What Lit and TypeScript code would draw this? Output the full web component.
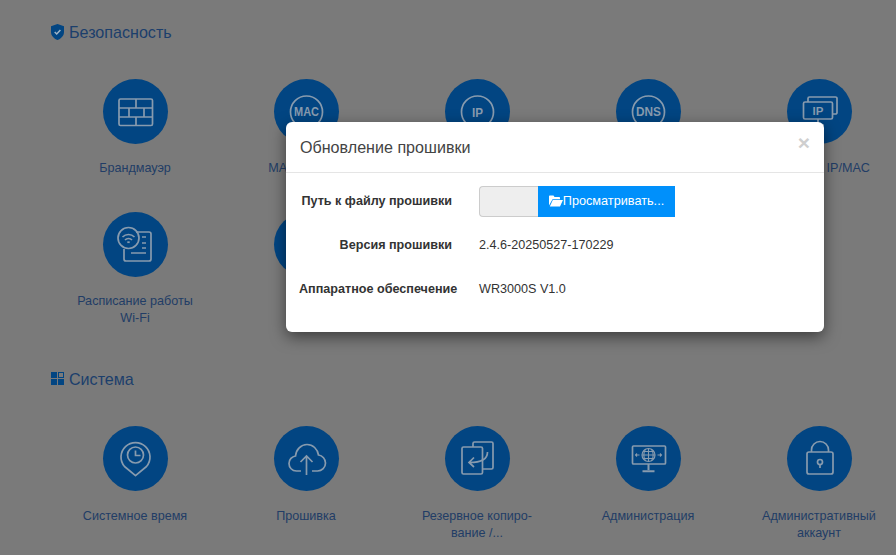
import { LitElement, html, css, svg } from "lit";
import { customElement } from "lit/decorators.js";

const ring = (t: string, size = 12, len = 25) => svg`<circle cx="32.5" cy="33" r="16"/><text x="32.5" y="${33 + size * 0.36}" font-size="${size}" text-anchor="middle" textLength="${len}" lengthAdjust="spacingAndGlyphs">${t}</text>`;

const ICONS: Record<string, unknown> = {
  wall: svg`<rect x="16" y="20" width="33.500" height="26.5" rx="1.5"/><path d="M16 29h33.500M16 38h33.500M33 20v9M26 29v9M41 29v9M33 38v8.5"/>`,
  mac: ring("MAC"),
  ip: ring("IP", 13, 11),
  dns: ring("DNS"),
  bind: svg`<rect x="16.5" y="23" width="29" height="17" rx="1.5"/><path d="M21 23v-3.5a1.5 1.5 0 0 1 1.5-1.5h26a1.5 1.5 0 0 1 1.5 1.5v14a1.5 1.5 0 0 1-1.5 1.5h-3M31 40v5M25 46h12"/><text x="31" y="36" font-size="11.5" text-anchor="middle">IP</text>`,
  wifi: svg`<path d="M33 20h13a2 2 0 0 1 2 2v25a2 2 0 0 1-2 2H23a2 2 0 0 1-2-2V37"/><circle cx="25.5" cy="26" r="10.5"/><path d="M19.5 25a8.5 8.5 0 0 1 12 0M22 28a5 5 0 0 1 7 0M24.3 30.5a2 2 0 0 1 2.4 0M39 25h4M39 31h4M39 36h4M28 41h15"/>`,
  time: svg`<path d="M32.5 49.700 L21.500 40.500 A14.500 14.500 0 1 1 43.500 40.500 Z" stroke-linejoin="round"/><circle cx="32.5" cy="29" r="8"/><path d="M32.5 24.500V29.500H37.500"/>`,
  cloud: svg`<path d="M27 45H22.5C18 45 15 41.5 15 37.5 15 33.5 18 30.5 21.5 30 22 23.5 27 18.5 33 18.5 39 18.5 43.5 23 44.5 29 48.5 29.5 51.5 33 51.5 37 51.5 41.5 48 45 43.5 45H38"/><path d="M32.5 49V30M26.5 36l6-6 6 6"/>`,
  backup: svg`<rect x="17" y="21" width="20.5" height="27" rx="1.5"/><path d="M28 21v-3.5a1.5 1.5 0 0 1 1.5-1.5h17a1.5 1.5 0 0 1 1.5 1.5v24a1.5 1.5 0 0 1-1.5 1.5h-9"/><path d="M42.5 26c0 7-6 10.500-18 10.500M29 31.500l-5 5 5 4.500"/>`,
  admin: svg`<rect x="16.500" y="20" width="33" height="18" rx="1"/><circle cx="32.500" cy="29" r="6.500" stroke-width="1.200"/><path stroke-width="1.100" d="M26 29h13M32.500 22.500v13M29.500 23c-2 3.500-2 8.500 0 12M35.500 23c2 3.500 2 8.500 0 12M27 25.500h11M27 32.500h11M19.500 29h4M45.500 29h-4M21 27.500l-1.500 1.500 1.500 1.500M44 27.500l1.500 1.500-1.500 1.500"/><path d="M32.500 38v6M26.500 45.200h12" stroke-width="2"/>`,
  lock: svg`<rect x="20" y="26" width="26" height="22" rx="2"/><path d="M24.500 26v-2a8.500 8.500 0 0 1 17 0v2"/><path d="M33 42v-3.500M33 38.500a2.500 2.500 0 1 0 0-5 2.500 2.500 0 0 0 0 5z"/>`,
  blank: svg``,
};

@customElement("app-root")
export class AppRoot extends LitElement {
  static styles = css`
    :host {
      display: block;
      position: relative;
      width: 896px;
      height: 555px;
      overflow: hidden;
      background: #7a7a7a;
      font-family: "Liberation Sans", Arial, sans-serif;
    }
    .page {
      display: flex;
      flex-direction: column;
      padding: 23px 0 0 49.5px;
    }
    .head {
      display: flex;
      align-items: center;
      gap: 5px;
      height: 18px;
      font-size: 16.1px;
      color: #1c3f6c;
      margin-left: 1.5px;
    }
    .head svg { flex: none; display: block; }
    .head svg.squares { margin-top: -2px; }
    .grid {
      display: grid;
      grid-template-columns: repeat(5, 171px);
      grid-auto-rows: 133px;
      width: 855px;
      margin-top: 38px;
    }
    .grid.sys { margin-top: 38px; grid-auto-rows: 128px; }
    .grid.sys .circle { margin-bottom: 17px; }
    .sec2 { margin-top: 25px; }
    .item {
      display: flex;
      flex-direction: column;
      align-items: center;
      text-align: center;
      font-size: 12.6px;
      line-height: 17px;
      color: #223d66;
    }
    .circle {
      width: 65px;
      height: 65px;
      border-radius: 50%;
      background: #024582;
      flex: none;
      margin-bottom: 16px;
    }
    .circle svg {
      display: block;
      fill: none;
      stroke: #889bae;
      stroke-width: 1.7;
    }
    .circle svg text {
      fill: #889bae;
      stroke: none;
      font-family: "Liberation Sans", Arial, sans-serif;
      font-weight: 700;
    }
    .label { width: 130px; }
    .label.wide { width: 171px; }
    .modal {
      position: absolute;
      left: 286px;
      top: 122px;
      width: 538px;
      height: 210px;
      background: #fff;
      border-radius: 6px;
      box-shadow: 0 5px 15px rgba(0, 0, 0, 0.5);
      color: #333;
    }
    .m-head {
      display: flex;
      align-items: center;
      justify-content: space-between;
      height: 51px;
      box-sizing: border-box;
      padding: 0 14px;
      border-bottom: 1px solid #e5e5e5;
      font-size: 16.1px;
      color: #444;
    }
    .close {
      font-size: 21px;
      font-weight: 700;
      color: #cfcfcf;
      margin-top: -10px;
      line-height: 21px;
    }
    .m-body {
      display: grid;
      grid-template-columns: 153px 1fr;
      column-gap: 27px;
      grid-auto-rows: 44px;
      align-items: center;
      padding: 6px 0 0 13px;
      font-size: 12.6px;
    }
    .lbl {
      font-weight: 700;
      text-align: right;
      white-space: nowrap;
      color: #333;
    }
    .file { display: flex; height: 31px; }
    .fake {
      width: 59px;
      box-sizing: border-box;
      background: #eee;
      border: 1px solid #ccc;
      border-right: 0;
      border-radius: 4px 0 0 4px;
    }
    .btn {
      width: 137px;
      display: flex;
      align-items: center;
      justify-content: center;
      background: #0090fb;
      color: #fff;
      font-size: 12.7px;
    }
    .btn svg { display: block; flex: none; }
  `;

  private item(icon: string, label: string, wide = false) {
    return html`<div class="item">
      <div class="circle"><svg width="65" height="65" viewBox="0 0 65 65">${ICONS[icon]}</svg></div>
      <div class="label ${wide ? "wide" : ""}">${label}</div>
    </div>`;
  }

  render() {
    return html`
      <div class="page">
        <div class="head">
          <svg width="13" height="16" viewBox="0 0 13 16">
            <path fill="#024582" d="M6.500 0 13 2.200V8c0 3.800-2.800 6.500-6.500 8C2.800 14.500 0 11.800 0 8V2.200z"/>
            <path fill="none" stroke="#9fb4c6" stroke-width="1.500" d="M3.700 8l2 2 3.700-4"/>
          </svg>
          <span>Безопасность</span>
        </div>
        <div class="grid">
          ${this.item("wall", "Брандмауэр")}
          ${this.item("mac", "MAC-фильтр")}
          ${this.item("ip", "IP-фильтр")}
          ${this.item("dns", "DNS-фильтр")}
          ${this.item("bind", "Привязка IP/MAC", true)}
          ${this.item("wifi", "Расписание работы Wi-Fi")}
          ${this.item("blank", "")}
        </div>
        <div class="head sec2">
          <svg class="squares" width="13" height="13" viewBox="0 0 13 13">
            <rect x="0" y="0" width="6" height="6" fill="#024582"/>
            <rect x="7.500" y="0.500" width="5" height="5" fill="none" stroke="#024582"/>
            <rect x="0" y="7" width="6" height="6" fill="#024582"/>
            <rect x="7" y="7" width="6" height="6" fill="#024582"/>
          </svg>
          <span>Система</span>
        </div>
        <div class="grid sys">
          ${this.item("time", "Системное время")}
          ${this.item("cloud", "Прошивка")}
          ${this.item("backup", "Резервное копиро-вание /...")}
          ${this.item("admin", "Администрация")}
          ${this.item("lock", "Административный аккаунт")}
        </div>
      </div>
      <div class="modal">
        <div class="m-head"><span>Обновление прошивки</span><span class="close">×</span></div>
        <div class="m-body">
          <div class="lbl">Путь к файлу прошивки</div>
          <div class="file">
            <div class="fake"></div>
            <div class="btn">
              <svg width="14" height="12" viewBox="0 0 14 12">
                <path fill="#fff" d="M0 10.500V1.500C0 .9.400.5 1 .5h3.500l1 1.500H10c.6 0 1 .4 1 1v1.200H3.500L0 10.500zM3.800 5H14l-3 6.500H.8z"/>
              </svg>
              <span>Просматривать...</span>
            </div>
          </div>
          <div class="lbl">Версия прошивки</div>
          <div>2.4.6-20250527-170229</div>
          <div class="lbl">Аппаратное обеспечение</div>
          <div>WR3000S V1.0</div>
        </div>
      </div>
    `;
  }
}
